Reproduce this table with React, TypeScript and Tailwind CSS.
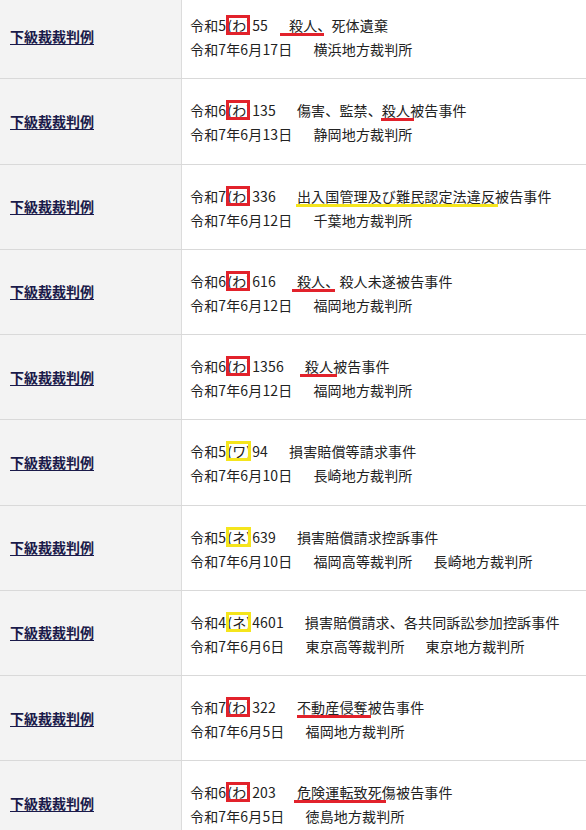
import React from "react";

type Seg = { t: string; u?: string };

type Row = {
  era: string;
  kind: string;
  num: string;
  box: "red" | "yellow";
  title: Seg[];
  date: string;
  courts: string[];
};

// annotation marks sit just below the glyphs, with small per-row overhangs
const rows: Row[] = [
  {
    era: "令和5",
    kind: "わ",
    num: "55",
    box: "red",
    title: [{ t: "殺人、", u: "left-[-9px] right-[7px] bg-[#e2222b]" }, { t: "死体遺棄" }],
    date: "令和7年6月17日",
    courts: ["横浜地方裁判所"],
  },
  {
    era: "令和6",
    kind: "わ",
    num: "135",
    box: "red",
    title: [
      { t: "傷害、監禁、" },
      { t: "殺人", u: "left-[-1px] right-[-4px] bg-[#e2222b]" },
      { t: "被告事件" },
    ],
    date: "令和7年6月13日",
    courts: ["静岡地方裁判所"],
  },
  {
    era: "令和7",
    kind: "わ",
    num: "336",
    box: "red",
    title: [
      { t: "出入国管理及び難民認定法違反", u: "left-[-1px] right-[-3px] bg-[#f5e51c]" },
      { t: "被告事件" },
    ],
    date: "令和7年6月12日",
    courts: ["千葉地方裁判所"],
  },
  {
    era: "令和6",
    kind: "わ",
    num: "616",
    box: "red",
    title: [{ t: "殺人、", u: "left-[-5px] right-[4px] bg-[#e2222b]" }, { t: "殺人未遂被告事件" }],
    date: "令和7年6月12日",
    courts: ["福岡地方裁判所"],
  },
  {
    era: "令和6",
    kind: "わ",
    num: "1356",
    box: "red",
    title: [{ t: "殺人", u: "left-[-5px] right-[-4px] bg-[#e2222b]" }, { t: "被告事件" }],
    date: "令和7年6月12日",
    courts: ["福岡地方裁判所"],
  },
  {
    era: "令和5",
    kind: "ワ",
    num: "94",
    box: "yellow",
    title: [{ t: "損害賠償等請求事件" }],
    date: "令和7年6月10日",
    courts: ["長崎地方裁判所"],
  },
  {
    era: "令和5",
    kind: "ネ",
    num: "639",
    box: "yellow",
    title: [{ t: "損害賠償請求控訴事件" }],
    date: "令和7年6月10日",
    courts: ["福岡高等裁判所", "長崎地方裁判所"],
  },
  {
    era: "令和4",
    kind: "ネ",
    num: "4601",
    box: "yellow",
    title: [{ t: "損害賠償請求、各共同訴訟参加控訴事件" }],
    date: "令和7年6月6日",
    courts: ["東京高等裁判所", "東京地方裁判所"],
  },
  {
    era: "令和7",
    kind: "わ",
    num: "322",
    box: "red",
    title: [{ t: "不動産侵奪", u: "left-0 right-[-3px] bg-[#e2222b]" }, { t: "被告事件" }],
    date: "令和7年6月5日",
    courts: ["福岡地方裁判所"],
  },
  {
    era: "令和6",
    kind: "わ",
    num: "203",
    box: "red",
    title: [{ t: "危険運転致死", u: "left-[-3px] right-[-4px] bg-[#e2222b]" }, { t: "傷被告事件" }],
    date: "令和7年6月5日",
    courts: ["徳島地方裁判所"],
  },
];

function CaseRow({ row }: { row: Row }) {
  return (
    <div className="flex h-[85.25px] border-b border-[#d9d9d9]">
      <div className="flex w-[182px] shrink-0 items-center border-r border-[#dcdcdc] bg-[#f3f3f3] pl-[10px]">
        <a href="#" className="text-[14px] font-bold text-[#1a1a4a] underline underline-offset-2">
          下級裁裁判例
        </a>
      </div>
      <div className="flex flex-col justify-center pl-2 pt-[2px] text-[14px] leading-6 tracking-[0.15px] text-[#222]">
        <div className="whitespace-nowrap">
          {row.era}
          <span className="relative px-[1px]">
            ({row.kind})
            <span
              className={
                row.box === "red"
                  ? "absolute inset-y-0 left-0 right-[2px] border-[3px] border-[#e2222b]"
                  : "absolute inset-y-0 left-0 right-[1px] border-[3px] border-[#f5e51c]"
              }
            />
          </span>
          {row.num}
          <span className="ml-[21px]">
            {row.title.map((s, i) => (
              <span key={i} className="relative">
                {s.t}
                {s.u && <span className={"absolute bottom-[-1px] h-[3px] " + s.u} />}
              </span>
            ))}
          </span>
        </div>
        <div className="whitespace-nowrap">
          {row.date}
          {row.courts.map((c) => (
            <span key={c} className="ml-[21px]">
              {c}
            </span>
          ))}
        </div>
      </div>
    </div>
  );
}

export default function App() {
  return (
    <div className="h-[830px] overflow-hidden bg-white font-['Noto_Sans_CJK_JP','Noto_Sans',sans-serif]">
      <div className="mt-[-6px]">
        {rows.map((r, i) => (
          <CaseRow key={i} row={r} />
        ))}
      </div>
    </div>
  );
}
